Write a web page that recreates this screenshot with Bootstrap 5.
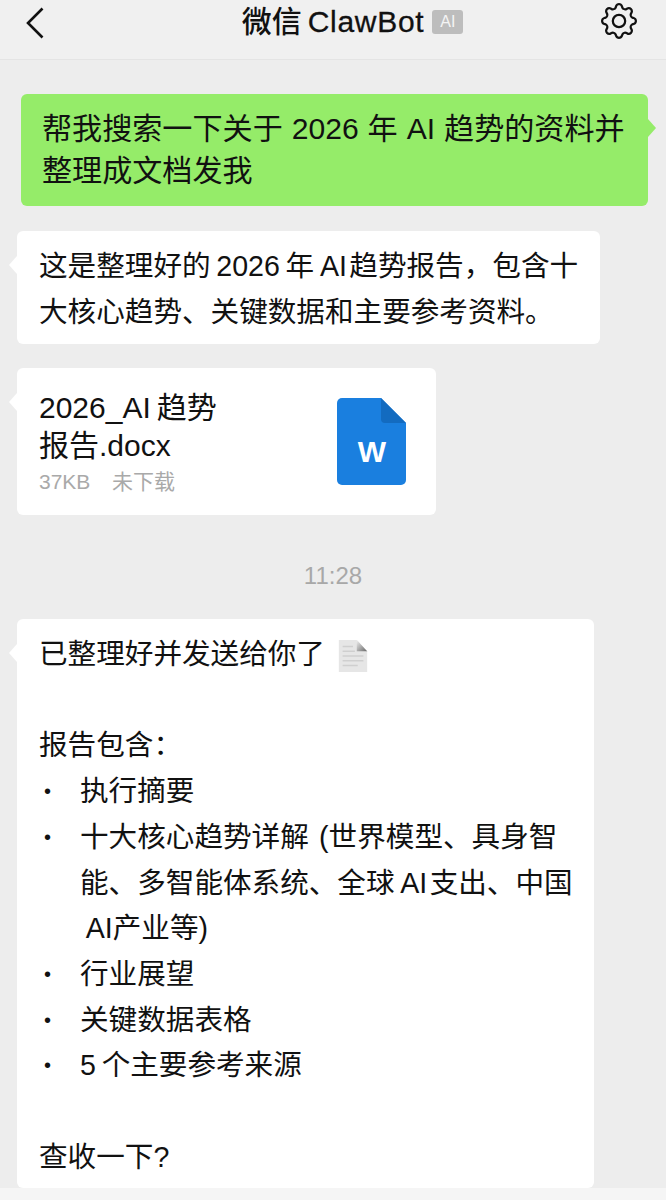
<!DOCTYPE html>
<html lang="zh-CN">

<head>
    <meta charset="UTF-8">
    <meta name="viewport" content="width=device-width, initial-scale=1.0">
    <title>微信 ClawBot</title>
    <link href="https://cdn.jsdelivr.net/npm/bootstrap@5.3.0/dist/css/bootstrap.min.css" rel="stylesheet">
    <style>
        html, body { height: 1200px; overflow: hidden; }
        body { background: #ededed; color: #111; font-family: "Liberation Sans", "Noto Sans CJK SC", sans-serif; font-size: 28.6px; line-height: 45.7px; }
        .top-bar { height: 60px; background: #f0f0f0; border-bottom: 1px solid #e4e4e4; padding: 3px 29px 0 26px; }
        .top-title { font-size: 30px; line-height: 38px; margin-left: 60px; font-weight: 500; }
        .title-latin { letter-spacing: .7px; -webkit-text-stroke: .3px #111; }
        .ai-tag { background: #bdbdbd; color: #f4f4f4; font-size: 16px; line-height: 24px; width: 31px; border-radius: 3px; text-align: center; margin-left: 8px; font-weight: 400; }
        .msg-list { padding-top: 34px; }
        .bubble { position: relative; background: #fff; border-radius: 6px; margin-left: 17px; white-space: nowrap; }
        .bubble::before { content: ""; position: absolute; left: -8px; top: 25px; width: 8px; height: 18px; background: inherit; clip-path: polygon(100% 0, 0 50%, 100% 100%); }
        .bubble-me { background: #95ec69; margin-left: 21px; width: 627px; height: 112px; padding: 14px 21px; font-size: 30.1px; line-height: 42px; word-spacing: .6px; }
        .bubble-me::before { left: auto; right: -8px; clip-path: polygon(0 0, 100% 50%, 0 100%); }
        .bubble-text { width: 583px; height: 113px; margin-top: 25px; padding: 13px 22px; }
        .bubble-file { width: 419px; height: 147px; margin-top: 24px; padding: 21px 30px 0 22px; }
        .file-name { line-height: 37.5px; width: 200px; font-size: 30px; }
        .file-info { color: #a9a9a9; font-size: 21px; line-height: 38px; margin-top: -1px; word-spacing: 5px; }
        .file-icon { margin-top: 9px; }
        .time-label { color: #a8a8a8; font-size: 24px; line-height: 30px; margin: 46px 0 28px; }
        .bubble-long { width: 577px; height: 569px; padding: 13px 22px; }
        .doc-emoji { margin-left: 12px; margin-top: 2px; }
        .dot-row { display: flex; }
        .dot-mark { width: 41px; flex: none; padding-left: 5px; font-size: 20px; }
        .spacer-line { height: 45.7px; }
        .bottom-strip { position: absolute; left: 0; right: 0; top: 1188px; height: 12px; background: #f5f5f5; }
    </style>
</head>

<body>
    <div class="top-bar d-flex justify-content-between align-items-start">
        <svg width="18" height="32" viewBox="0 0 18 32" fill="none" stroke="#111" stroke-width="2.6" class="mt-1"><path d="M16.5 1.5 2 16l14.5 14.5"/></svg>
        <div class="top-title d-flex align-items-center"><span>微信&#8201;<span class="title-latin">ClawBot</span></span><span class="ai-tag">AI</span></div>
        <svg width="36" height="36" viewBox="0 0 16 16" fill="#111">
            <path d="M8 4.754a3.246 3.246 0 1 0 0 6.492 3.246 3.246 0 0 0 0-6.492zM5.754 8a2.246 2.246 0 1 1 4.492 0 2.246 2.246 0 0 1-4.492 0z"/>
            <path d="M9.796 1.343c-.527-1.79-3.065-1.79-3.592 0l-.094.319a.873.873 0 0 1-1.255.52l-.292-.16c-1.64-.892-3.433.902-2.54 2.541l.159.292a.873.873 0 0 1-.52 1.255l-.319.094c-1.79.527-1.79 3.065 0 3.592l.319.094a.873.873 0 0 1 .52 1.255l-.16.292c-.892 1.64.901 3.434 2.541 2.54l.292-.159a.873.873 0 0 1 1.255.52l.094.319c.527 1.79 3.065 1.79 3.592 0l.094-.319a.873.873 0 0 1 1.255-.52l.292.16c1.64.893 3.434-.902 2.54-2.541l-.159-.292a.873.873 0 0 1 .52-1.255l.319-.094c1.79-.527 1.79-3.065 0-3.592l-.319-.094a.873.873 0 0 1-.52-1.255l.16-.292c.893-1.64-.902-3.433-2.541-2.54l-.292.159a.873.873 0 0 1-1.255-.52l-.094-.319zm-2.633.283c.246-.835 1.428-.835 1.674 0l.094.319a1.873 1.873 0 0 0 2.693 1.115l.291-.16c.764-.415 1.6.42 1.184 1.185l-.159.292a1.873 1.873 0 0 0 1.116 2.692l.318.094c.835.246.835 1.428 0 1.674l-.319.094a1.873 1.873 0 0 0-1.115 2.693l.16.291c.415.764-.42 1.6-1.185 1.184l-.291-.159a1.873 1.873 0 0 0-2.693 1.116l-.094.318c-.246.835-1.428.835-1.674 0l-.094-.319a1.873 1.873 0 0 0-2.692-1.115l-.292.16c-.764.415-1.6-.42-1.184-1.185l.159-.291A1.873 1.873 0 0 0 1.945 8.93l-.319-.094c-.835-.246-.835-1.428 0-1.674l.319-.094A1.873 1.873 0 0 0 3.06 4.377l-.16-.292c-.415-.764.42-1.6 1.185-1.184l.292.159a1.873 1.873 0 0 0 2.692-1.115l.094-.319z"/>
        </svg>
    </div>

    <div class="msg-list">
        <div class="bubble bubble-me">帮我搜索一下关于 2026 年 AI 趋势的资料并<br>整理成文档发我</div>

        <div class="bubble bubble-text">这是整理好的&#8201;2026&#8201;年&#8201;AI&#8202;趋势报告，包含十<br>大核心趋势、关键数据和主要参考资料。</div>

        <div class="bubble bubble-file d-flex justify-content-between">
            <div>
                <div class="file-name">2026_AI&#8201;趋势<br>报告.docx</div>
                <div class="file-info">37KB&nbsp; 未下载</div>
            </div>
            <svg width="69" height="87" viewBox="0 0 69 87" class="file-icon">
                <path d="M5 0h39l25 25v57a5 5 0 0 1-5 5H5a5 5 0 0 1-5-5V5a5 5 0 0 1 5-5z" fill="#1a7fdf"/>
                <path d="M44 0l25 25H48a4 4 0 0 1-4-4z" fill="#136bc0"/>
                <text x="35" y="64" text-anchor="middle" fill="#fff" font-family="Liberation Sans" font-weight="700" font-size="30">W</text>
            </svg>
        </div>

        <div class="time-label text-center">11:28</div>

        <div class="bubble bubble-long">
            <div class="d-flex align-items-center">已整理好并发送给你了
                <svg width="32" height="34" viewBox="0 0 32 36" class="doc-emoji">
                    <defs><linearGradient id="curl" x1="0" y1="0" x2="1" y2="1"><stop offset="0" stop-color="#f2f2f2"/><stop offset="1" stop-color="#666"/></linearGradient></defs>
                    <path d="M1 1h19l11 12v22H1z" fill="#e6e6e6"/>
                    <path d="M20 1l11 12H20z" fill="url(#curl)"/>
                    <path d="M5 8h11M5 13h13M5 18h22M5 23h22M5 28h16" stroke="#cfcfcf" stroke-width="1.5"/>
                </svg>
            </div>
            <div class="spacer-line"></div>
            <div>报告包含：</div>
            <div class="dot-row"><span class="dot-mark">•</span><span>执行摘要</span></div>
            <div class="dot-row"><span class="dot-mark">•</span><span>十大核心趋势详解&#8202; (世界模型、具身智<br>能、多智能体系统、全球&#8201;AI&#8202;支出、中国<br>&#8201;AI产业等)</span></div>
            <div class="dot-row"><span class="dot-mark">•</span><span>行业展望</span></div>
            <div class="dot-row"><span class="dot-mark">•</span><span>关键数据表格</span></div>
            <div class="dot-row"><span class="dot-mark">•</span><span>5&#8201;个主要参考来源</span></div>
            <div class="spacer-line"></div>
            <div>查收一下?</div>
        </div>
    </div>
    <div class="bottom-strip"></div>

    <script src="https://cdn.jsdelivr.net/npm/bootstrap@5.3.0/dist/js/bootstrap.bundle.min.js"></script>
</body>

</html>
